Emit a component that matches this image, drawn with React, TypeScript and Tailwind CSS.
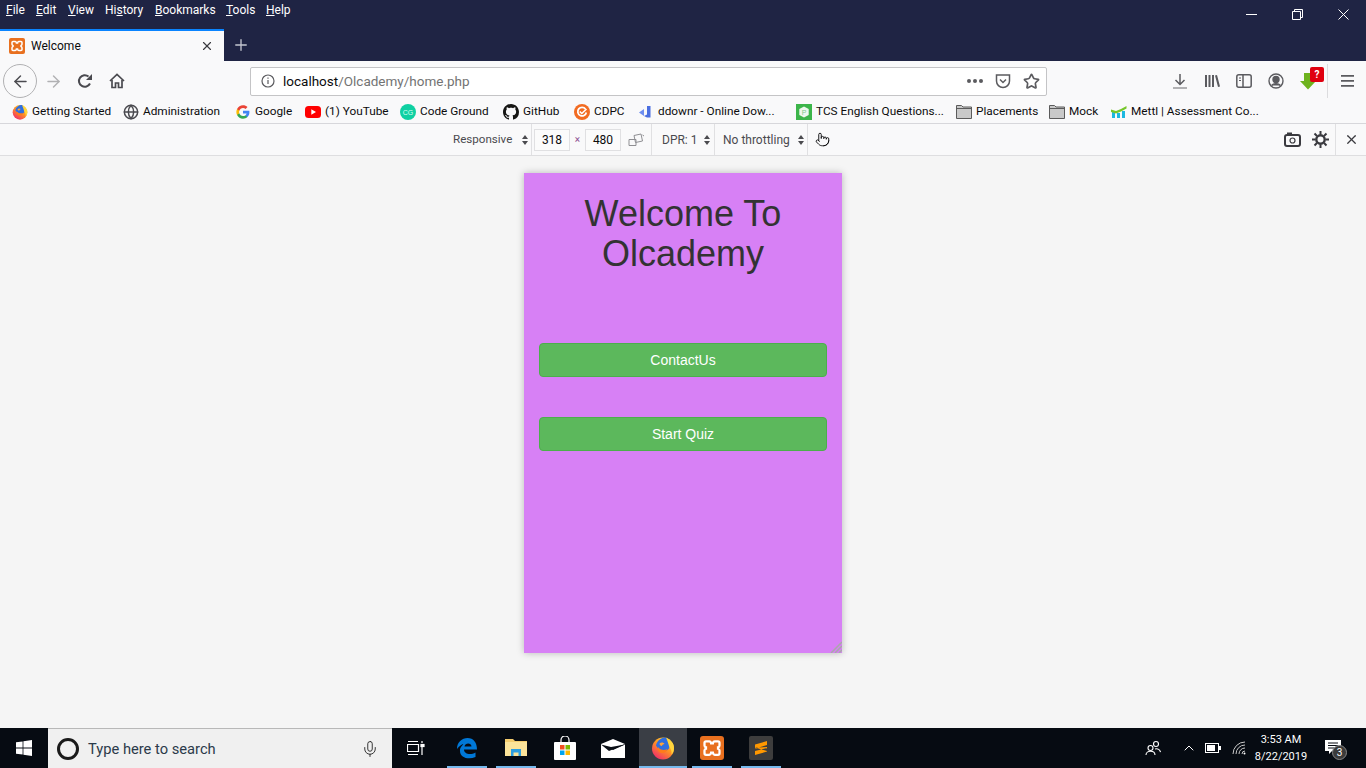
import { ArrowLeft, ArrowRight, ChevronUp, Globe, Mic, Plus, Pointer, Star, X } from 'lucide-react';

const menus = [
    { u: 'F', rest: 'ile', cls: 'ml-[6px] w-[18px]' },
    { u: 'E', rest: 'dit', cls: 'ml-[12px] w-[20px]' },
    { u: 'V', rest: 'iew', cls: 'ml-[12px] w-[25px]' },
    { u: '', rest: 'History', cls: 'ml-[12px] w-[38px]' },
    { u: 'B', rest: 'ookmarks', cls: 'ml-[12px] w-[59px]' },
    { u: 'T', rest: 'ools', cls: 'ml-[12px] w-[28px]' },
    { u: 'H', rest: 'elp', cls: 'ml-[12px] w-[25px]' },
];

const XamppIcon = ({ size = 16 }: { size?: number }) => (
    <svg width={size} height={size} viewBox="0 0 16 16">
        <rect width="16" height="16" rx="2" fill="#e8701f" />
        <path d="M4 3.500h2.200q1 0 1.200 1.400h1.200q.2-1.400 1.200-1.400H12q1 0 1 1v1.800q0 1-1 1.200v1q1 .2 1 1.200v1.800q0 1-1 1H9.800q-1 0-1.200-1.400H7.400q-.2 1.400-1.200 1.400H4q-1 0-1-1V9.700q0-1 1-1.200v-1q-1-.2-1-1.200V4.500q0-1 1-1z" fill="none" stroke="#fff" strokeWidth="1.500" />
    </svg>
);

const FirefoxIcon = ({ size = 16, id }: { size?: number; id: string }) => (
    <svg width={size} height={size} viewBox="0 0 24 24">
        <defs>
            <linearGradient id={id} x1="0.9" y1="0" x2="0.2" y2="1">
                <stop offset="0" stopColor="#ffe14a" />
                <stop offset="0.45" stopColor="#ff9a1f" />
                <stop offset="1" stopColor="#f0266e" />
            </linearGradient>
        </defs>
        <circle cx="12" cy="12.500" r="11" fill={`url(#${id})`} />
        <path d="M5 9.500C6 4.500 10 1.500 15 1.500c3 2 4.500 5 4 8.500-.6 3.500-3.500 5.500-7 5-3-.4-5-2-7-5.500z" fill="#2f6fe0" />
        <path d="M15 1.500c5 2.500 8 6 8 10.500 0 2.500-1 5-2.500 6.500.5-3-.5-5.500-2-7-1-3.500-2-6.500-3.500-10z" fill="#ffd53d" />
        <path d="M7 11c2 3 6 4 9.500 2-1 3.500-4.500 5-7.500 3.500C7 15.500 6.500 13 7 11z" fill="#ff7b1a" />
        <path d="M8.500 7.500c2-1.500 4-1 5 .5-1.500 0-2.500 1-2.500 2-1.500 0-2.500-1-2.500-2.500z" fill="#ffa53a" />
    </svg>
);

const GoogleIcon = () => (
    <svg width="14" height="14" viewBox="0 0 24 24">
        <path d="M23 12.300c0-.8-.1-1.600-.2-2.300H12v4.400h6.200c-.3 1.400-1.100 2.600-2.300 3.400v2.800h3.700c2.100-2 3.400-4.900 3.400-8.300z" fill="#4285f4" />
        <path d="M12 23.500c3.100 0 5.700-1 7.600-2.800l-3.700-2.900c-1 .7-2.300 1.100-3.900 1.100-3 0-5.500-2-6.400-4.700H1.800v2.900c1.900 3.800 5.800 6.400 10.200 6.400z" fill="#34a853" />
        <path d="M5.600 14.200c-.5-1.400-.5-3 0-4.400V6.900H1.800c-1.600 3.200-1.600 7 0 10.200l3.800-2.900z" fill="#fbbc05" />
        <path d="M12 5.100c1.700 0 3.200.6 4.400 1.700l3.300-3.300C17.700 1.600 15.100.5 12 .5 7.600.5 3.700 3.100 1.800 6.900l3.800 2.900C6.500 7.100 9 5.100 12 5.100z" fill="#ea4335" />
    </svg>
);

const YoutubeIcon = () => (
    <svg width="16" height="16" viewBox="0 0 16 16">
        <rect y="2" width="16" height="12" rx="3.500" fill="#f00" />
        <path d="M6.300 5.200 11 8l-4.700 2.800z" fill="#fff" />
    </svg>
);

const CodeGroundIcon = () => (
    <svg width="16" height="16" viewBox="0 0 16 16">
        <circle cx="8" cy="8" r="8" fill="#0fd0a2" />
        <text x="8" y="10.500" textAnchor="middle" fontSize="7" fill="#d9fff4" fontFamily="Liberation Sans, sans-serif">CG</text>
    </svg>
);

const GithubIcon = () => (
    <svg width="16" height="16" viewBox="0 0 16 16" fill="#161614">
        <path d="M8 0C3.580 0 0 3.580 0 8c0 3.540 2.290 6.530 5.470 7.590.4.070.55-.17.55-.38 0-.19-.01-.82-.01-1.490-2.010.37-2.530-.49-2.690-.94-.09-.23-.48-.94-.82-1.130-.28-.15-.68-.52-.01-.53.63-.01 1.080.58 1.230.82.720 1.210 1.870.87 2.330.66.070-.52.280-.87.510-1.070-1.780-.2-3.640-.89-3.640-3.950 0-.87.310-1.590.820-2.150-.08-.2-.36-1.020.08-2.120 0 0 .670-.21 2.200.82.640-.18 1.320-.27 2-.27s1.360.09 2 .27c1.530-1.040 2.200-.82 2.200-.82.440 1.100.16 1.920.08 2.120.51.560.82 1.270.82 2.150 0 3.070-1.870 3.750-3.650 3.950.29.250.54.730.54 1.480 0 1.070-.01 1.930-.01 2.200 0 .21.150.46.550.38A8.010 8.010 0 0 0 16 8c0-4.420-3.580-8-8-8z" />
    </svg>
);

const CdpcIcon = () => (
    <svg width="16" height="16" viewBox="0 0 16 16">
        <circle cx="8" cy="8" r="8" fill="#f26b21" />
        <path d="M11.500 5A4.300 4.300 0 1 0 12.300 8.500" fill="none" stroke="#fff" strokeWidth="1.800" />
        <path d="M5.800 7.500 7.800 9.500 12.500 5" fill="none" stroke="#fff" strokeWidth="1.600" />
    </svg>
);

const DdownrIcon = () => (
    <svg width="16" height="16" viewBox="0 0 16 16">
        <path d="M1 8.500 6 5v7z" fill="#6d8df0" />
        <path d="M9 2h3.500v11.500H9l-3-1.500 3-1.500z" fill="#4a6ee0" />
    </svg>
);

const TcsIcon = () => (
    <svg width="16" height="16" viewBox="0 0 16 16">
        <rect width="16" height="16" fill="#3cb54a" />
        <path d="M8 2.500 12.700 5v6L8 13.500 3.300 11V5z" fill="#eef7ee" />
        <text x="8" y="10.500" textAnchor="middle" fontSize="7" fill="#7dc98a" fontFamily="Liberation Sans, sans-serif">P</text>
    </svg>
);

const FolderIcon = () => (
    <svg width="16" height="16" viewBox="0 0 16 16">
        <path d="M.5 1.500h5l1.500 1.500h8.500v11.500H.5z" fill="#c9c9c9" stroke="#5b5b5b" />
        <path d="M.5 4.500h15" stroke="#5b5b5b" />
    </svg>
);

const MettlIcon = () => (
    <svg width="16" height="16" viewBox="0 0 16 16">
        <path d="M1 8h3v6H1zM6 9h3v5H6zM11 7h3v7h-3z" fill="#1cb8e0" />
        <path d="M0 5.500 5 7l5-2 5.500-3v2.500L10 7.500 5 9.500 0 8z" fill="#76c72b" />
    </svg>
);

const bookmarks = [
    { icon: <FirefoxIcon id="ff-small" />, label: 'Getting Started', cls: 'ml-[12px] w-[111px]' },
    { icon: <Globe className="w-4 h-4 text-[#4a4a4f]" strokeWidth={2.200} />, label: 'Administration', cls: 'w-[112px]' },
    { icon: <div className="w-4 flex justify-center"><GoogleIcon /></div>, label: 'Google', cls: 'w-[70px]' },
    { icon: <YoutubeIcon />, label: '(1) YouTube', cls: 'w-[95px]' },
    { icon: <CodeGroundIcon />, label: 'Code Ground', cls: 'w-[103px]' },
    { icon: <GithubIcon />, label: 'GitHub', cls: 'w-[71px]' },
    { icon: <CdpcIcon />, label: 'CDPC', cls: 'w-[64px]' },
    { icon: <DdownrIcon />, label: 'ddownr - Online Dow...', cls: 'w-[158px]' },
    { icon: <TcsIcon />, label: 'TCS English Questions...', cls: 'w-[160px]' },
    { icon: <FolderIcon />, label: 'Placements', cls: 'w-[93px]' },
    { icon: <FolderIcon />, label: 'Mock', cls: 'w-[62px]' },
    { icon: <MettlIcon />, label: 'Mettl | Assessment Co...', cls: '' },
];

const SortArrows = () => (
    <svg width="6" height="10" viewBox="0 0 6 10" fill="#4a4a4f">
        <path d="M3 0 6 4H0zM3 10 0 6h6z" />
    </svg>
);

const Browser = () => (
    <div className="flex flex-col text-[12px] shrink-0">
        {/* Menu and tab strip */}
        <div className="h-[61px] bg-[#1f2444] flex flex-col">
            <div className="h-[29px] relative flex items-start text-white text-[12px]">
                <div className="flex pt-[1px]">
                    {menus.map((m) => (
                        <span key={m.rest} className={`whitespace-nowrap ${m.cls}`}>
                            {m.rest === 'History' ? <>Hi<u>s</u>tory</> : <><u>{m.u}</u>{m.rest}</>}
                        </span>
                    ))}
                </div>
                <div className="ml-auto flex items-center h-[28px] text-white">
                    <div className="w-[46px] flex justify-center"><div className="w-[11px] h-px bg-white" /></div>
                    <div className="w-[46px] flex justify-center">
                        <svg width="11" height="11" viewBox="0 0 11 11" fill="none" stroke="#fff"><path d="M.5 2.500h8v8h-8zM2.500 2.500V.5h8v8h-2" /></svg>
                    </div>
                    <div className="w-[46px] flex justify-center">
                        <svg width="11" height="11" viewBox="0 0 11 11" stroke="#fff"><path d="M.5.5l10 10M10.500.5l-10 10" /></svg>
                    </div>
                </div>
            </div>
            <div className="h-[32px] flex items-center">
                <div className="w-[224px] h-full bg-[#f9f9fa] border-t-2 border-[#0a84ff] flex items-center pl-[9px] pr-[10px]">
                    <XamppIcon />
                    <span className="ml-[6px] text-[#0c0c0d]">Welcome</span>
                    <X className="ml-auto w-[14px] h-[14px] text-[#3a3a3f]" strokeWidth={2} />
                </div>
                <Plus className="ml-[8px] w-[18px] h-[18px] text-[#c4c6d0]" strokeWidth={1.800} />
            </div>
        </div>

        {/* Navigation bar */}
        <div className="h-[40px] bg-[#f9f9fa] flex items-center text-[#4a4a4f]">
            <div className="ml-[3px] w-[34px] h-[34px] rounded-full border border-[#b1b1b3] flex items-center justify-center">
                <ArrowLeft className="w-[19px] h-[19px]" strokeWidth={1.800} />
            </div>
            <ArrowRight className="ml-[7px] w-[19px] h-[19px] text-[#b1b1b3]" strokeWidth={1.800} />
            <svg className="ml-[14px]" width="16" height="16" viewBox="0 0 16 16" fill="none" stroke="#4a4a4f" strokeWidth="2">
                <path d="M13 10.500A5.800 5.800 0 1 1 11.500 3.500" />
                <path d="M15 1v6H9z" fill="#4a4a4f" stroke="none" />
            </svg>
            <svg className="ml-[16px]" width="16" height="16" viewBox="0 0 16 16" fill="none" stroke="#4a4a4f" strokeWidth="1.700">
                <path d="M1 8 8 1.500 15 8" />
                <path d="M3 7v7.500h3.500V10h3v4.500H13V7" />
            </svg>
            <div className="ml-[125px] w-[797px] h-[29px] bg-white border border-[#c4c4c6] rounded-[2px] flex items-center pl-[10px] pr-[6px]">
                <svg width="14" height="14" viewBox="0 0 14 14" fill="none" stroke="#5b5b5f" strokeWidth="1.200">
                    <circle cx="7" cy="7" r="6" />
                    <path d="M7 6v4M7 3.500v1.300" />
                </svg>
                <span className="ml-[8px] text-[13.500px] text-[#0c0c0d]">localhost<span className="text-[#737373]">/Olcademy/home.php</span></span>
                <div className="ml-auto flex items-center">
                    <span className="flex gap-[2px]">
                        <i className="w-[4px] h-[4px] rounded-full bg-[#5b5b5f]" />
                        <i className="w-[4px] h-[4px] rounded-full bg-[#5b5b5f]" />
                        <i className="w-[4px] h-[4px] rounded-full bg-[#5b5b5f]" />
                    </span>
                    <svg className="ml-[12px]" width="16" height="16" viewBox="0 0 16 16" fill="none" stroke="#5b5b5f" strokeWidth="1.500">
                        <path d="M1.500 2h13v6a6.500 6.500 0 0 1-13 0z" />
                        <path d="M5 6.500 8 9.500l3-3" />
                    </svg>
                    <Star className="ml-[12px] w-[17px] h-[17px] text-[#5b5b5f]" strokeWidth={2.400} />
                </div>
            </div>
            <svg className="ml-[125px]" width="16" height="16" viewBox="0 0 16 16" fill="none" stroke="#5b5b5f" strokeWidth="1.500">
                <path d="M8 1v10M3.500 7 8 11.500 12.500 7" />
                <path d="M1 15h14" stroke="#b1b1b3" strokeWidth="2" />
            </svg>
            <svg className="ml-[16px]" width="16" height="16" viewBox="0 0 16 16" fill="#5b5b5f">
                <path d="M1 2h2v12H1zM4.500 2h2v12h-2zM8 2h2v12H8zM11 2.500l2-.6 3 11.500-2 .6z" />
            </svg>
            <svg className="ml-[16px]" width="16" height="14" viewBox="0 0 16 14" fill="none" stroke="#5b5b5f" strokeWidth="1.500">
                <rect x=".8" y=".8" width="14.400" height="12.400" rx="2" />
                <path d="M7 1v12" />
                <path d="M3 4h2M3 6.500h2" strokeWidth="1" />
            </svg>
            <svg className="ml-[16px]" width="16" height="16" viewBox="0 0 16 16" fill="none" stroke="#5b5b5f" strokeWidth="1.400">
                <circle cx="8" cy="8" r="7" />
                <circle cx="8" cy="6.500" r="3" fill="#5b5b5f" />
                <path d="M3.500 12.500c2-2.500 7-2.500 9 0" fill="#5b5b5f" />
            </svg>
            <div className="ml-[16px] relative w-[16px] h-[16px]">
                <svg width="16" height="17" viewBox="0 0 16 17" fill="#6eb31e">
                    <path d="M4 0h8v8h4L8 16.500 0 8h4z" />
                </svg>
                <div className="absolute -top-[6px] left-[10px] w-[14px] h-[15px] bg-[#e0000f] rounded-[2px] text-white text-[10px] font-bold leading-[15px] text-center">?</div>
            </div>
            <div className="ml-[11px] w-px h-[34px] bg-[#dcdcde]" />
            <svg className="ml-[13px]" width="13" height="12" viewBox="0 0 13 12" fill="#5b5b5f">
                <path d="M0 0h13v1.800H0zM0 5h13v1.800H0zM0 10h13v1.800H0z" />
            </svg>
        </div>

        {/* Bookmarks toolbar */}
        <div className="h-[23px] bg-[#f9f9fa] border-b border-[#d7d7db] flex items-center text-[#0c0c0d] text-[11.800px]">
            {bookmarks.map((b) => (
                <div key={b.label} className={`flex items-center gap-[4px] whitespace-nowrap ${b.cls}`}>
                    {b.icon}
                    <span>{b.label}</span>
                </div>
            ))}
        </div>

        {/* Responsive design toolbar */}
        <div className="h-[32px] bg-[#f9f9fa] border-b border-[#dedee0] flex items-center text-[#4a4a4f] text-[12px]">
            <span className="ml-[453px] w-[69px] text-[11.600px]">Responsive</span>
            <SortArrows />
            <div className="ml-[3px] w-px h-[31px] bg-[#e0e0e2]" />
            <div className="ml-[2px] w-[36px] h-[22px] border border-[#e0e0e2] bg-[#fbfbfb] flex items-center justify-center text-[#0c0c0d]">318</div>
            <span className="w-[15px] text-center text-[#8f4f93] text-[10px]">×</span>
            <div className="w-[36px] h-[22px] border border-[#e0e0e2] bg-[#fbfbfb] flex items-center justify-center text-[#0c0c0d]">480</div>
            <svg className="ml-[6px]" width="18" height="14" viewBox="0 0 18 14" fill="none" stroke="#8f8f93">
                <path d="M7 2.500l7-1.500 1.500 7-7 1.500zM2 6.500h7v6H2z" />
                <path d="M15.500 2 17 3" />
            </svg>
            <div className="ml-[6px] w-px h-[31px] bg-[#e0e0e2]" />
            <span className="ml-[10px] w-[42px]">DPR: 1</span>
            <SortArrows />
            <div className="ml-[4px] w-px h-[31px] bg-[#e0e0e2]" />
            <span className="ml-[8px] w-[75px]">No throttling</span>
            <SortArrows />
            <div className="ml-[3px] w-px h-[31px] bg-[#e0e0e2]" />
            <Pointer className="ml-[7px] w-[15px] h-[15px] text-[#0c0c0d]" strokeWidth={1.500} />
            <svg className="ml-auto" width="17" height="15" viewBox="0 0 17 15" fill="none" stroke="#3a3a3f" strokeWidth="2">
                <rect x="1" y="3" width="15" height="11" rx="2" />
                <circle cx="8.500" cy="8.500" r="2.500" strokeWidth="1.200" />
                <path d="M3 1.500h5" />
            </svg>
            <svg className="ml-[11px]" width="17" height="17" viewBox="0 0 17 17" fill="none" stroke="#3a3a3f">
                <circle cx="8.500" cy="8.500" r="4.200" strokeWidth="2.400" />
                <path d="M8.500 0v17M0 8.500h17M2.500 2.500l12 12M14.500 2.500l-12 12" strokeWidth="2" strokeDasharray="3.500 10" />
            </svg>
            <div className="ml-[6px] w-px h-[31px] bg-[#e0e0e2]" />
            <X className="ml-[8px] mr-[7px] w-[15px] h-[15px] text-[#3a3a3f]" strokeWidth={2} />
        </div>
    </div>
);

const PhonePage = () => (
    <div className="relative w-[318px] h-[480px] bg-[#d780f5] shadow-[0_0_7px_rgba(0,0,0,0.25)] px-[15px] pt-[21px] font-['Liberation_Sans',sans-serif]">
        <h1 className="text-[36px] leading-[40px] text-[#333] text-center">Welcome To Olcademy</h1>
        <button className="mt-[69px] w-full h-[34px] bg-[#5cb85c] border border-[#4cae4c] rounded-[4px] text-white text-[14px]">ContactUs</button>
        <button className="mt-[40px] w-full h-[34px] bg-[#5cb85c] border border-[#4cae4c] rounded-[4px] text-white text-[14px]">Start Quiz</button>
        <svg className="absolute right-0 bottom-0" width="12" height="12" viewBox="0 0 12 12" stroke="#a9a9a9" strokeWidth="1.500">
            <path d="M1 12 12 1M5 12l7-7M9 12l3-3" />
        </svg>
    </div>
);

const EdgeIcon = () => (
    <svg width="22" height="22" viewBox="0 0 22 22">
        <path d="M1 12C1 5 6 1 11.500 1 17.500 1 21 5.500 21 12.500H8c0 4.500 6.500 6 11.500 3v4.500C13 23 4 21 4 14 3.500 10 8 7 8 7c-2 0-5 2-7 5zM8.500 9.500h7c0-4-6.500-4-7 0z" fill="#0078d7" fillRule="evenodd" />
    </svg>
);

const ExplorerIcon = () => (
    <svg width="22" height="20" viewBox="0 0 22 20">
        <path d="M0 1h8l2 2h12v15H0z" fill="#f5cd6e" />
        <path d="M0 4h22v14H0z" fill="#fce49a" />
        <path d="M6 11h10v7h-2.500v-3.500h-5V18H6z" fill="#2d9fe0" />
    </svg>
);

const StoreIcon = () => (
    <svg width="24" height="24" viewBox="0 0 24 24">
        <path d="M8 6V4a4 4 0 0 1 8 0v2" fill="none" stroke="#fff" strokeWidth="1.200" />
        <rect x="1" y="6" width="22" height="18" rx="1" fill="#fff" />
        <path d="M7 9h4.500v4.500H7z" fill="#f25022" />
        <path d="M12.500 9H17v4.500h-4.500z" fill="#7fba00" />
        <path d="M7 14.500h4.500V19H7z" fill="#00a4ef" />
        <path d="M12.500 14.500H17V19h-4.500z" fill="#ffb900" />
    </svg>
);

const MailIcon = () => (
    <svg width="24" height="19" viewBox="0 0 24 19">
        <path d="M0 5 12 0l12 5-14 5 2 1 12-5.500V19H0z" fill="#fff" />
        <path d="M0 5.500 8 12l16-6.500L10 8z" fill="#0a0f16" />
    </svg>
);

const SublimeIcon = () => (
    <div className="w-[24px] h-[24px] rounded-[2px] bg-[#3d3d3d] flex items-center justify-center">
        <svg width="14" height="16" viewBox="0 0 14 16" fill="#ff9800">
            <path d="M13 1v4L1 8.500v-4zM1 7.500l12 3.500v-4zM13 8v3.500L1 15v-4z" />
        </svg>
    </div>
);

const Slot = ({ cls, icon, active, running }: { cls: string; icon: React.ReactNode; active?: boolean; running?: boolean }) => (
    <div className={`relative h-full flex items-center justify-center ${cls} ${active ? 'bg-[#3a3e45]' : ''}`}>
        {icon}
        {running && <div className={`absolute bottom-0 h-[2px] bg-[#76b9ed] ${active ? 'left-0 right-0' : 'left-[4px] right-[4px]'}`} />}
    </div>
);

const Taskbar = () => (
    <div className="h-[40px] bg-[#060b12] flex items-center text-white shrink-0">
        <div className="w-[48px] h-full flex items-center justify-center">
            <svg width="16" height="16" viewBox="0 0 16 16" fill="#fff">
                <path d="M0 2.300 6.600 1.400v6.200H0zM7.400 1.300 16 0v7.600H7.400zM0 8.400h6.600v6.200L0 13.700zM7.400 8.400H16V16l-8.600-1.300z" />
            </svg>
        </div>
        <div className="w-[344px] h-full bg-[#f0f0f0] border-t border-[#b8b8b8] flex items-center pl-[9px] pr-[13px] text-[#2b3a4a]">
            <div className="w-[22px] h-[22px] rounded-full border-[3px] border-[#1a1a1a]" />
            <span className="ml-[9px] pt-[1px] text-[14.700px]">Type here to search</span>
            <Mic className="ml-auto w-[18px] h-[18px] text-[#222]" strokeWidth={1.200} />
        </div>
        <Slot cls="w-[48px]" icon={
            <svg width="18" height="16" viewBox="0 0 18 16" fill="none" stroke="#fff" strokeWidth="1.200">
                <path d="M.5 4.500h11v7H.5zM1 1.500h10M1 14.500h10M15 1v2M15 7v8" />
                <rect x="14" y="4.500" width="3" height="2" fill="#fff" />
            </svg>
        } />
        <Slot cls="ml-[3px] w-[48px]" icon={<EdgeIcon />} running />
        <Slot cls="ml-px w-[48px]" icon={<ExplorerIcon />} running />
        <Slot cls="ml-px w-[48px]" icon={<StoreIcon />} />
        <Slot cls="w-[48px]" icon={<MailIcon />} />
        <Slot cls="ml-[2px] w-[48px]" icon={<FirefoxIcon size={24} id="ff-large" />} active running />
        <Slot cls="ml-px w-[48px]" icon={<XamppIcon size={24} />} running />
        <Slot cls="ml-px w-[48px]" icon={<SublimeIcon />} running />
        <div className="ml-auto flex items-center h-full">
            <svg width="16" height="16" viewBox="0 0 16 16" fill="none" stroke="#fff" strokeWidth="1.100">
                <circle cx="5.500" cy="8" r="2.500" /><path d="M1 15c0-5 9-5 9 0" />
                <circle cx="11" cy="4" r="2.500" /><path d="M10 9c3-1 5 1 5.500 3" />
            </svg>
            <ChevronUp className="ml-[20px] w-[16px] h-[16px] text-white" strokeWidth={1.500} />
            <svg className="ml-[8px]" width="16" height="10" viewBox="0 0 16 10" fill="none" stroke="#fff">
                <rect x=".5" y=".5" width="13" height="9" />
                <rect x="2" y="2" width="8" height="6" fill="#fff" stroke="none" />
                <path d="M15 3v4" strokeWidth="2" />
            </svg>
            <svg className="ml-[11px]" width="14" height="14" viewBox="0 0 14 14" fill="none" stroke="#c9c9c9">
                <path d="M1 13A12 12 0 0 1 13 1M4 13a9 9 0 0 1 9-9M7 13a6 6 0 0 1 6-6M10 13a3 3 0 0 1 3-3" />
                <circle cx="12.500" cy="12.500" r="1" fill="#fff" stroke="none" />
            </svg>
            <div className="ml-[5px] w-[60px] text-center text-[11px] leading-[17px]">
                <div>3:53 AM</div>
                <div>8/22/2019</div>
            </div>
            <div className="ml-[14px] mr-[25px] relative w-[16px] h-[16px]">
                <svg width="16" height="15" viewBox="0 0 16 15" fill="#fff">
                    <path d="M0 0h16v11H7l-3 3v-3H0z" />
                    <path d="M3 3h10M3 5.500h10M3 8h6" stroke="#060b12" />
                </svg>
                <div className="absolute top-[5px] left-[7px] w-[15px] h-[15px] rounded-full bg-[#3b3b3b] border border-[#888] text-[10px] leading-[13px] text-center">3</div>
            </div>
        </div>
    </div>
);

export default function App() {
    return (
        <div className="w-[1366px] h-[768px] flex flex-col overflow-hidden font-['Roboto',sans-serif]">
            <Browser />
            <main className="flex-1 bg-[#f5f5f5] flex justify-center pt-[17px]">
                <PhonePage />
            </main>
            <Taskbar />
        </div>
    );
}
